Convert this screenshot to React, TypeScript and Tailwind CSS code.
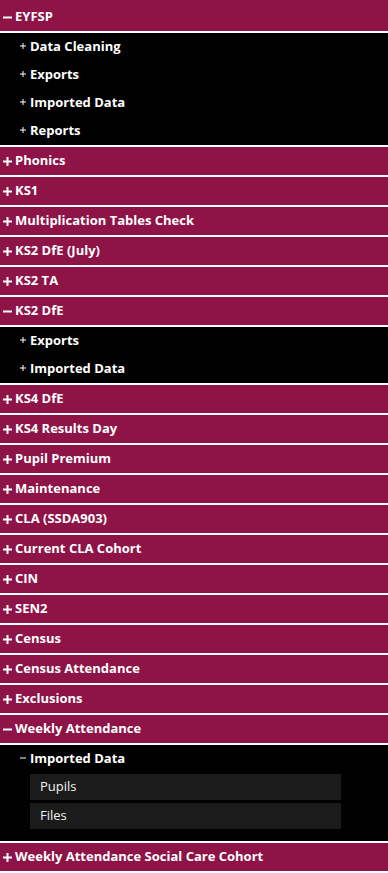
import { Fragment } from "react";

type Item = {
  label: string;
  children?: { label: string; open?: boolean; leaves?: string[] }[];
};

const items: Item[] = [
  {
    label: "EYFSP",
    children: [
      { label: "Data Cleaning" },
      { label: "Exports" },
      { label: "Imported Data" },
      { label: "Reports" },
    ],
  },
  { label: "Phonics" },
  { label: "KS1" },
  { label: "Multiplication Tables Check" },
  { label: "KS2 DfE (July)" },
  { label: "KS2 TA" },
  {
    label: "KS2 DfE",
    children: [{ label: "Exports" }, { label: "Imported Data" }],
  },
  { label: "KS4 DfE" },
  { label: "KS4 Results Day" },
  { label: "Pupil Premium" },
  { label: "Maintenance" },
  { label: "CLA (SSDA903)" },
  { label: "Current CLA Cohort" },
  { label: "CIN" },
  { label: "SEN2" },
  { label: "Census" },
  { label: "Census Attendance" },
  { label: "Exclusions" },
  {
    label: "Weekly Attendance",
    children: [{ label: "Imported Data", open: true, leaves: ["Pupils", "Files"] }],
  },
  { label: "Weekly Attendance Social Care Cohort" },
];

const BigIcon = ({ open }: { open: boolean }) => (
  <svg width="9" height="9" viewBox="0 0 9 9" className="shrink-0">
    <rect x="0" y="3.5" width="9" height="2" fill="white" />
    {!open && <rect x="3.5" y="0" width="2" height="9" fill="white" />}
  </svg>
);

const SmallIcon = ({ open }: { open: boolean }) => (
  <svg width="6" height="6" viewBox="0 0 6 6" className="shrink-0 -mt-[3px]">
    <rect x="0" y="2.5" width="6" height="1" fill="white" />
    {!open && <rect x="2.5" y="0" width="1" height="6" fill="white" />}
  </svg>
);

export default function App() {
  return (
    <div
      className="w-[388px] h-[873px] overflow-hidden bg-white text-white text-[13px]"
      style={{ fontFamily: '"Open Sans", "Liberation Sans", sans-serif' }}
    >
      {items.map((item, i) => {
        const open = !!item.children;
        return (
          <Fragment key={item.label}>
            <div
              className={`flex items-center gap-[3px] pl-[3px] bg-[#8e1347] font-bold border-b-2 border-white ${
                i === 0 ? "h-[33px] pt-[3px]" : "h-[30px]"
              }`}
            >
              <BigIcon open={open} />
              <span>{item.label}</span>
            </div>
            {item.children && (
              <div
                className={`bg-black border-b-2 border-white ${
                  item.children.some((c) => c.leaves) ? "pb-[12px]" : ""
                }`}
              >
                {item.children.map((c) => (
                  <div key={c.label}>
                    <div className="h-[28px] flex items-center gap-[4px] pl-[20px] font-bold">
                      <SmallIcon open={!!c.open} />
                      <span>{c.label}</span>
                    </div>
                    {c.leaves && (
                      <div className="flex flex-col gap-[3px] pl-[30px] pr-[47px] pt-[1px]">
                        {c.leaves.map((l) => (
                          <div
                            key={l}
                            className="h-[26px] flex items-center px-[10px] bg-[#1b1b1b] text-[#f2f2f2]"
                          >
                            {l}
                          </div>
                        ))}
                      </div>
                    )}
                  </div>
                ))}
              </div>
            )}
          </Fragment>
        );
      })}
    </div>
  );
}
